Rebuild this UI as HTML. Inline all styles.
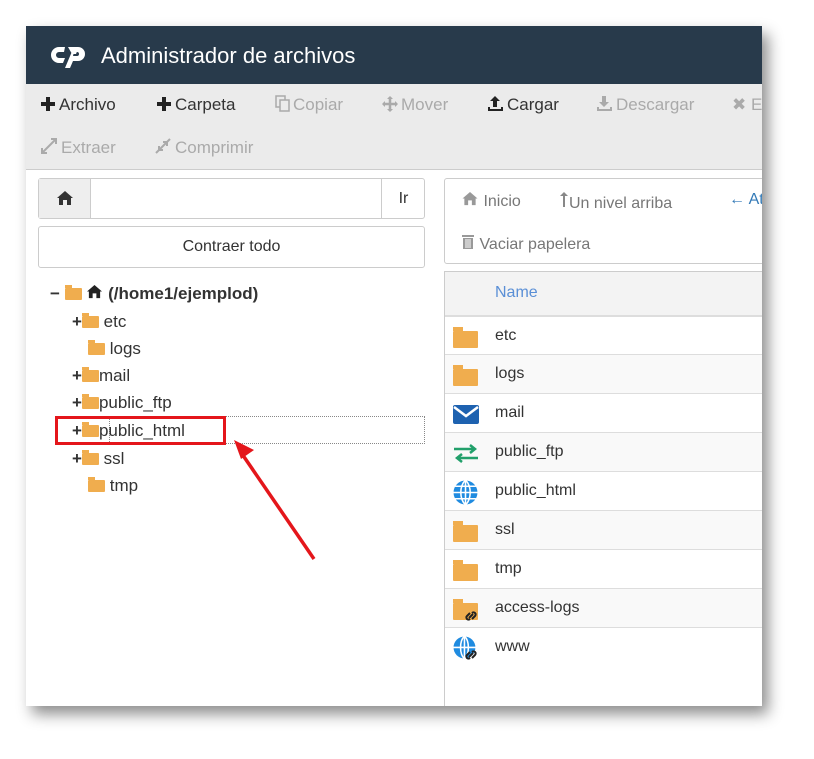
<!DOCTYPE html>
<html><head><meta charset="utf-8"><style>
body{margin:0;width:814px;height:759px;background:#fff;position:relative;overflow:hidden;font-family:"Liberation Sans",sans-serif}
.win{position:absolute;left:26px;top:26px;width:736px;height:680px;background:#fff;box-shadow:6px 8px 14px rgba(0,0,0,.45);overflow:hidden}
.hdr{position:absolute;left:0;top:0;width:736px;height:58px;background:#283a4b;color:#fff;font-size:22px}
.hdr .t{position:absolute;left:75px;top:17px}
.tb{position:absolute;left:0;top:58px;width:736px;height:85px;background:#ebebeb;border-bottom:1px solid #ccc;font-size:17px;color:#333}
.tb span{position:absolute;white-space:nowrap;top:11px}
.tb span svg{vertical-align:-2px;margin-right:3px}
.g{color:#aaa}
.a{position:absolute;white-space:nowrap}
.box{position:absolute;border:1px solid #ccc;border-radius:3px;box-sizing:border-box}
.tree{position:absolute;font-size:17px;color:#333}
.fo{display:inline-block;width:17px;height:12px;background:#f0ad4e;border-radius:1px;position:relative;vertical-align:-1px}
.fo:before{content:"";position:absolute;left:0;top:-3px;width:7px;height:3px;background:#f0ad4e}
.row{position:absolute;left:418px;width:320px;height:38px;border-top:1px solid #ddd;font-size:16px;color:#333}
.row .n{position:absolute;left:51px;top:10px}
.row .ic{position:absolute;left:9px;top:14px}
.big{width:25px;height:17px}
.big:before{width:10px;height:4px;top:-4px}
</style></head><body>
<div class="win">
 <div class="hdr">
  <svg style="position:absolute;left:25px;top:18px" width="38" height="24" viewBox="0 0 38 24"><path d="M14 3H8a8 8 0 0 0 0 16h4l2-5H8a3 3 0 0 1 0-6h5z M17 3h10a7 7 0 0 1 0 14h-5l-3 7h-5l8-19h5l-2 5h-4 M22 12h4a2 2 0 0 0 0-4h-3" fill="#fff"/></svg>
  <span class="t">Administrador de archivos</span>
 </div>
 <div class="tb">
  <span style="left:14px"><svg width="16" height="16"><path d="M8 1v14M1 8h14" stroke="#222" stroke-width="4"/></svg>Archivo</span>
  <span style="left:130px"><svg width="16" height="16"><path d="M8 1v14M1 8h14" stroke="#222" stroke-width="4"/></svg>Carpeta</span>
  <span class="g" style="left:249px"><svg width="15" height="17"><rect x="1" y="1" width="9" height="11" fill="none" stroke="#aaa" stroke-width="1.5"/><rect x="5" y="5" width="9" height="11" fill="#ebebeb" stroke="#aaa" stroke-width="1.5"/></svg>Copiar</span>
  <span class="g" style="left:356px"><svg width="16" height="16"><path d="M8 1v14M1 8h14" stroke="#aaa" stroke-width="2.5"/><path d="M8 0l3 3H5zM8 16l3-3H5zM0 8l3 3V5zM16 8l-3 3V5z" fill="#aaa"/></svg>Mover</span>
  <span style="left:461px"><svg width="17" height="17"><path d="M8 1l5 5h-3v6H6V6H3z M1 12v4h15v-4h-2v2H3v-2z" fill="#222"/></svg>Cargar</span>
  <span class="g" style="left:570px"><svg width="17" height="17"><path d="M6 1h4v6h3l-5 5-5-5h3z M1 12v4h15v-4h-2v2H3v-2z" fill="#aaa"/></svg>Descargar</span>
  <span class="g" style="left:706px">✖ E</span>
  <span class="g" style="left:14px;top:53px"><svg width="18" height="18"><path d="M2 16L16 2M11 2h5v5M2 11v5h5" stroke="#aaa" stroke-width="2" fill="none"/></svg>Extraer</span>
  <span class="g" style="left:128px;top:53px"><svg width="18" height="18"><path d="M2 16L16 2M5 9v4h4M9 5h4v4" stroke="#aaa" stroke-width="2" fill="none"/></svg>Comprimir</span>
 </div>
 <div class="box" style="left:12px;top:152px;width:387px;height:41px;background:#fff"></div>
 <div style="position:absolute;left:13px;top:153px;width:51px;height:39px;background:#eee;border-right:1px solid #ccc;text-align:center"><svg style="margin-top:11px" width="18" height="16" viewBox="0 0 18 16"><path d="M9 1L1 8h2v7h4v-5h4v5h4V8h2z" fill="#333"/></svg></div>
 <div style="position:absolute;left:355px;top:153px;width:43px;height:39px;border-left:1px solid #ccc;font-size:16px;text-align:center;line-height:39px;color:#333">Ir</div>
 <div class="box" style="left:12px;top:200px;width:387px;height:42px;text-align:center;line-height:40px;font-size:16px;color:#333">Contraer todo</div>
 <div class="box" style="left:418px;top:152px;width:330px;height:86px;font-size:16px;color:#777">
  <span class="a" style="left:16px;top:12px"><svg width="18" height="15" viewBox="0 0 18 16"><path d="M9 1L1 8h2v7h4v-5h4v5h4V8h2z" fill="#999"/></svg> Inicio</span>
  <span class="a" style="left:114px;top:12px"><svg width="10" height="17"><path d="M5 1l4 4H6v11H4V5H1z" fill="#888"/></svg>Un nivel arriba</span>
  <span class="a" style="left:284px;top:12px;color:#337ab7">← At</span>
  <span class="a" style="left:16px;top:54px"><svg width="14" height="16"><rect x="1" y="2" width="12" height="2" fill="#999"/><rect x="2" y="5" width="10" height="11" fill="#999"/><path d="M5 6v9M7 6v9M9 6v9" stroke="#fff"/></svg> Vaciar papelera</span>
 </div>
 <div style="position:absolute;left:418px;top:245px;width:1px;height:440px;background:#ccc;z-index:2"></div>
 <div style="position:absolute;left:418px;top:245px;width:320px;height:44px;background:#f3f3f3;border-top:1px solid #ccc"><span class="a" style="left:51px;top:12px;color:#5a8fd6;font-size:16px">Name</span></div>
 <div class="row" style="top:289px;border-top:2px solid #ddd"><span class="ic fo big"></span><span class="n">etc</span></div>
 <div class="row" style="top:328px;background:#f9f9f9"><span class="ic fo big"></span><span class="n">logs</span></div>
 <div class="row" style="top:367px"><svg class="ic" style="top:11px" width="26" height="20" viewBox="0 0 26 20"><rect width="26" height="19" rx="2" fill="#1e62b0"/><path d="M1 2l12 9 12-9" stroke="#fff" stroke-width="2.5" fill="none"/></svg><span class="n">mail</span></div>
 <div class="row" style="top:406px;background:#f9f9f9"><svg class="ic" style="top:11px" width="26" height="20" viewBox="0 0 26 20"><path d="M1 5h21M17 1l5 4-5 4M25 14H4M9 10l-5 4 5 4" stroke="#22a06b" stroke-width="2.5" fill="none"/></svg><span class="n">public_ftp</span></div>
 <div class="row" style="top:445px"><svg class="ic" style="top:8px" width="25" height="25" viewBox="0 0 24 24"><circle cx="12" cy="12" r="11.5" fill="#1f8be0"/><path d="M0 12h24M12 0v24M12 0c-6 6-6 18 0 24M12 0c6 6 6 18 0 24M2 6h20M2 18h20" stroke="#fff" stroke-width="1.5" fill="none"/></svg><span class="n">public_html</span></div>
 <div class="row" style="top:484px;background:#f9f9f9"><span class="ic fo big"></span><span class="n">ssl</span></div>
 <div class="row" style="top:523px"><span class="ic fo big"></span><span class="n">tmp</span></div>
 <div class="row" style="top:562px;background:#f9f9f9"><span class="ic fo big"></span><svg style="position:absolute;left:20px;top:20px" width="14" height="14" viewBox="0 0 14 14"><path d="M6 4l-3 3a2 2 0 0 0 3 3M8 10l3-3a2 2 0 0 0-3-3M5 9l4-4" stroke="#222" stroke-width="2" fill="none"/></svg><span class="n">access-logs</span></div>
 <div class="row" style="top:601px"><svg class="ic" style="top:8px" width="25" height="25" viewBox="0 0 24 24"><circle cx="11" cy="11" r="10.5" fill="#1f8be0"/><path d="M0 11h22M11 0v22M11 0c-5 5-5 17 0 22M11 0c5 5 5 17 0 22" stroke="#fff" stroke-width="1.5" fill="none"/></svg><svg style="position:absolute;left:20px;top:20px" width="14" height="14" viewBox="0 0 14 14"><path d="M6 4l-3 3a2 2 0 0 0 3 3M8 10l3-3a2 2 0 0 0-3-3M5 9l4-4" stroke="#222" stroke-width="2" fill="none"/></svg><span class="n">www</span></div>

 <div class="tree" style="left:24px;top:258px;font-weight:bold">− <span class="fo"></span> <svg width="17" height="15" viewBox="0 0 18 16"><path d="M9 1L1 8h2v7h4v-5h4v5h4V8h2z" fill="#222"/></svg> (/home1/ejemplod)</div>
 <div class="tree" style="left:46px;top:286px"><b>+</b><span class="fo"></span> etc</div>
 <div class="tree" style="left:62px;top:313px"><span class="fo"></span> logs</div>
 <div class="tree" style="left:46px;top:340px"><b>+</b><span class="fo"></span>mail</div>
 <div class="tree" style="left:46px;top:367px"><b>+</b><span class="fo"></span>public_ftp</div>
 <div style="position:absolute;left:83px;top:390px;width:316px;height:28px;border:1px dotted #888;box-sizing:border-box"></div>
 <div class="tree" style="left:46px;top:395px"><b>+</b><span class="fo"></span>public_html</div>
 <div style="position:absolute;left:29px;top:390px;width:171px;height:29px;border:3px solid #e4161b;box-sizing:border-box"></div>
 <div class="tree" style="left:46px;top:423px"><b>+</b><span class="fo"></span> ssl</div>
 <div class="tree" style="left:62px;top:450px"><span class="fo"></span> tmp</div>
 <svg style="position:absolute;left:200px;top:405px" width="100" height="135"><path d="M88 128L14 20" stroke="#e4161b" stroke-width="3.5"/><path d="M8 9l20 10-13 9z" fill="#e4161b"/></svg>
</div>
</body></html>
